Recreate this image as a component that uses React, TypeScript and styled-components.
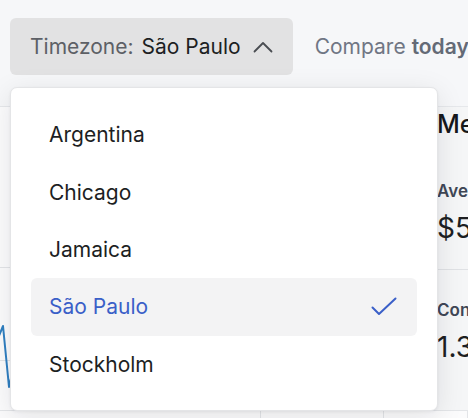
import React from "react";
import { styled, createGlobalStyle } from "styled-components";

const zones = ["Argentina", "Chicago", "Jamaica", "São Paulo", "Stockholm"];
const selected = "São Paulo";

const GlobalStyle = createGlobalStyle`
  html, body {
    margin: 0;
    padding: 0;
    background: #f6f7f9;
  }
  body {
    font-family: Inter, "Noto Sans", sans-serif;
    color: #1d1f23;
    overflow: hidden;
  }
`;

const ChevronUp = () => (
  <svg width="20" height="20" viewBox="0 0 20 20" fill="none">
    <path d="M1.5 14.5L10 6L18.5 14.5" stroke="#4a4d52" strokeWidth="1.8" strokeLinecap="round" strokeLinejoin="round" />
  </svg>
);

const Check = () => (
  <svg width="26" height="20" viewBox="0 0 26 20" fill="none">
    <path d="M1.5 10.5L8 17L24.5 1.5" stroke="#3a5fc8" strokeWidth="2" strokeLinecap="round" strokeLinejoin="round" />
  </svg>
);

const App = () => {
  return (
    <Page>
      <GlobalStyle />
      <Header>
        <TimezoneButton>
          <Label>Timezone:</Label>
          <Value>{selected}</Value>
          <ChevronUp />
        </TimezoneButton>
        <Compare>
          Compare <b>today</b> with yesterday
        </Compare>
      </Header>
      <Main>
        <ChartPanel>
          <svg width="420" height="303" viewBox="0 0 420 303">
            <line x1="0" y1="160.5" x2="420" y2="160.5" stroke="#e3e5e8" />
            <line x1="0" y1="253.5" x2="420" y2="253.5" stroke="#e3e5e8" />
            <path
              d="M-4 236 L3 219 L9 280 L16 250 L24 262 L34 230 L44 258"
              stroke="#2f7fc1"
              strokeWidth="2"
              fill="none"
              strokeLinejoin="round"
            />
          </svg>
        </ChartPanel>
        <MetricsPanel>
          <MetricsTitle>Metrics</MetricsTitle>
          <Metric>
            <MetricLabel>Average order value</MetricLabel>
            <MetricValue>$54.20</MetricValue>
          </Metric>
          <Metric $divided>
            <MetricLabel>Conversion rate</MetricLabel>
            <MetricValue>1.32%</MetricValue>
          </Metric>
        </MetricsPanel>
        <Dropdown>
          {zones.map((zone) => (
            <Option key={zone} $active={zone === selected}>
              {zone}
              {zone === selected && <Check />}
            </Option>
          ))}
        </Dropdown>
      </Main>
      <Footer>
        <FooterCell $width={262} />
        <FooterCell $width={122} />
        <FooterCell $width={84} />
      </Footer>
    </Page>
  );
};

const Page = styled.div`
  width: 468px;
  height: 418px;
  overflow: hidden;
  background: #f6f7f9;
`;

const Header = styled.div`
  height: 107px;
  box-sizing: border-box;
  padding: 18px 0 0 10px;
  display: flex;
  align-items: flex-start;
  gap: 22px;
  white-space: nowrap;
  border-bottom: 1px solid #e6e8eb;
`;

const TimezoneButton = styled.button`
  height: 57px;
  flex-shrink: 0;
  display: flex;
  align-items: center;
  gap: 8px;
  padding: 0 20px 0 20px;
  border: none;
  border-radius: 6px;
  background: #e2e2e3;
  font-family: inherit;
  font-size: 21px;
  cursor: pointer;
  svg {
    margin-left: 4px;
  }
`;

const Label = styled.span`
  color: #5d6066;
`;

const Value = styled.span`
  color: #1d1f23;
`;

const Compare = styled.div`
  height: 57px;
  display: flex;
  align-items: center;
  gap: 6px;
  font-size: 21px;
  color: #707684;
  b {
    font-weight: 600;
    color: #646a76;
  }
`;

const Main = styled.div`
  position: relative;
  height: 303px;
  display: grid;
  grid-template-columns: 420px 1fr;
  background: #fcfcfd;
`;

const ChartPanel = styled.div`
  overflow: hidden;
  border-right: 1px solid #e6e8eb;
  svg {
    display: block;
  }
`;

const MetricsPanel = styled.div`
  padding: 0 0 0 17px;
  white-space: nowrap;
  overflow: hidden;
  background: #f5f6f7;
`;

const MetricsTitle = styled.div`
  font-size: 25px;
  font-weight: 500;
  line-height: 30px;
  margin-top: 2px;
  color: #16181b;
`;

const Metric = styled.div<{ $divided?: boolean }>`
  padding: ${(p) => (p.$divided ? "28px 0 0" : "40px 0 0")};
  margin-top: ${(p) => (p.$divided ? "24px" : "0")};
  border-top: ${(p) => (p.$divided ? "1px solid #e0e2e5" : "none")};
`;

const MetricLabel = styled.div`
  font-size: 17px;
  font-weight: 600;
  line-height: 24px;
  color: #3f4756;
`;

const MetricValue = styled.div`
  font-size: 28px;
  line-height: 34px;
  margin-top: 8px;
  color: #1d1f23;
`;

const Dropdown = styled.div`
  position: absolute;
  left: 10px;
  top: -20px;
  width: 428px;
  height: 324px;
  box-sizing: border-box;
  padding: 18px 20px 20px;
  background: #ffffff;
  border: 1px solid #e4e5e7;
  border-radius: 7px;
  box-shadow: 0 6px 28px rgba(20, 24, 32, 0.1), 0 1px 3px rgba(20, 24, 32, 0.06);
  display: flex;
  flex-direction: column;
`;

const Option = styled.div<{ $active?: boolean }>`
  height: 57.4px;
  flex-shrink: 0;
  display: flex;
  align-items: center;
  justify-content: space-between;
  padding: 0 20px 0 18px;
  border-radius: 6px;
  font-size: 21px;
  color: ${(p) => (p.$active ? "#3a5fc8" : "#1d1f23")};
  background: ${(p) => (p.$active ? "#f3f3f4" : "transparent")};
`;

const Footer = styled.div`
  display: flex;
  height: 8px;
  border-top: 1px solid #e3e5e8;
  background: #fbfbfc;
`;

const FooterCell = styled.div<{ $width: number }>`
  width: ${(p) => p.$width}px;
  border-right: 1px solid #e3e5e8;
`;

export default App;
